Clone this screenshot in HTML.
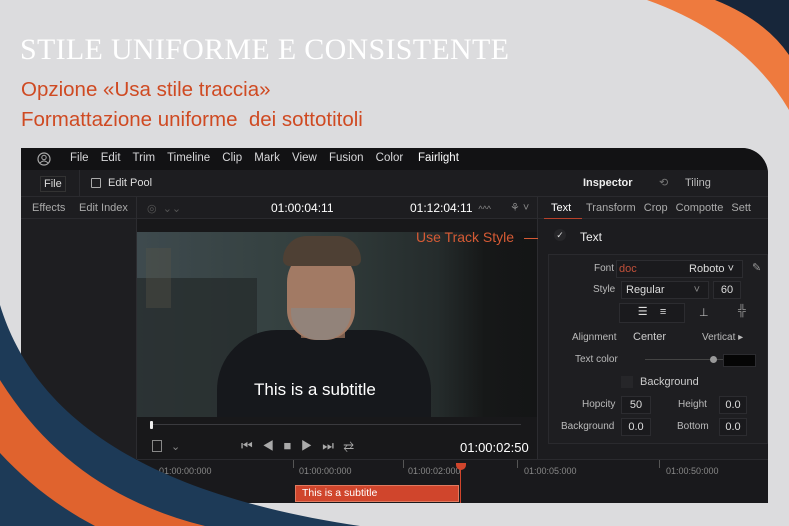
<!DOCTYPE html>
<html><head><meta charset="utf-8"><style>
*{margin:0;padding:0;box-sizing:border-box}
body{width:789px;height:526px;overflow:hidden;background:#dcdcde;position:relative;font-family:"Liberation Sans",sans-serif;}
.a{position:absolute}
.t{color:#c9c9cc;font-size:11px;white-space:nowrap}
.w{color:#fff}
.box{position:absolute;background:#1a1a1d;border:1px solid #2c2c30;color:#ddd;font-size:11px;text-align:center;line-height:16px}
</style></head><body>
<svg class="a" style="left:0;top:0" width="789" height="526">
<path d="M647,0 Q745,35 789,110 L789,0Z" fill="#ee7a3e"/>
<path d="M715,0 Q765,20 789,55 L789,0Z" fill="#17263a"/>
</svg>
<div class="a" style="left:20px;top:33px;font-family:'Liberation Serif',serif;font-size:30px;color:#fff;letter-spacing:0.3px;white-space:nowrap">STILE UNIFORME E CONSISTENTE</div>
<div class="a" style="left:21px;top:78px;font-size:20.5px;color:#cf4a22;white-space:nowrap">Opzione «Usa stile traccia»</div>
<div class="a" style="left:21px;top:108px;font-size:20.5px;color:#cf4a22;white-space:nowrap">Formattazione uniforme&nbsp; dei sottotitoli</div>

<!-- window -->
<div class="a" style="left:21px;top:148px;width:747px;height:355px;background:#1b1b1e;border-top-right-radius:26px;overflow:hidden">
 <div class="a" style="left:0;top:0;width:747px;height:22px;background:#121214"></div>
 <svg class="a" style="left:16px;top:4px" width="14" height="14"><circle cx="7" cy="7" r="6" fill="none" stroke="#aaa" stroke-width="1.2"/><circle cx="7" cy="5.5" r="2.2" fill="none" stroke="#aaa"/><path d="M3,11 Q7,7 11,11" fill="none" stroke="#aaa"/></svg>
 <div class="a t" style="left:49px;top:4px;font-size:11.5px;color:#d8d8da;word-spacing:9px">File Edit Trim Timeline Clip Mark View Fusion Color</div>
 <div class="a t" style="left:397px;top:4px;font-size:11.5px;color:#fff">Fairlight</div>
 <div class="a" style="left:0;top:22px;width:747px;height:27px;background:#1d1d20;border-bottom:1px solid #2a2a2e"></div>
 <div class="a t" style="left:19px;top:28px;border:1px solid #333;padding:1px 3px;color:#ddd">File</div>
 <div class="a" style="left:58px;top:22px;width:1px;height:27px;background:#2a2a2e"></div>
 <div class="a" style="left:70px;top:30px;width:10px;height:10px;border:1.3px solid #aaa;border-radius:1px"></div>
 <div class="a t" style="left:87px;top:29px;color:#ddd">Edit Pool</div>
 <div class="a t" style="left:562px;top:29px;color:#eee;font-weight:bold">Inspector</div>
 <div class="a t" style="left:638px;top:28px;color:#777">⟲</div>
 <div class="a t" style="left:664px;top:29px;color:#bbb">Tiling</div>
 <!-- row 3 -->
 <div class="a" style="left:0;top:49px;width:747px;height:22px;background:#1d1d20;border-bottom:1px solid #2a2a2e"></div>
 <div class="a t" style="left:11px;top:54px;color:#aaa">Effects</div>
 <div class="a t" style="left:58px;top:54px;color:#aaa">Edit Index</div>
 <div class="a" style="left:115px;top:49px;width:1px;height:262px;background:#2c2c30"></div>
 <div class="a t" style="left:126px;top:54px;color:#555">◎ &nbsp;⌄⌄</div>
 <div class="a t w" style="left:250px;top:53px;font-size:12px">01:00:04:11</div>
 <div class="a t w" style="left:389px;top:53px;font-size:12px">01:12:04:11 <span style="color:#888;font-size:9px">&nbsp;^^^</span></div>
 <div class="a t" style="left:489px;top:53px;color:#888">⚘ ˅</div>
 <div class="a" style="left:516px;top:49px;width:1px;height:262px;background:#2c2c30"></div>
 <div class="a t" style="left:530px;top:54px;color:#fff">Text</div>
 <div class="a" style="left:523px;top:70px;width:38px;height:2px;background:#b8412a"></div>
 <div class="a t" style="left:565px;top:54px;color:#aaa;word-spacing:5px">Transform Crop Compotte Sett</div>
 <!-- left panel -->
 <div class="a" style="left:0;top:71px;width:115px;height:240px;background:#1e1e21"></div>
 <!-- viewer -->
 <div class="a" style="left:116px;top:71px;width:400px;height:240px;background:#18181a"></div>
 <div class="a" style="left:116px;top:84px;width:400px;height:185px;background:linear-gradient(90deg,#3e4a4e 0%,#34403f 40%,#252c2c 75%,#161818 87%,#141516 100%)"></div>
 <div class="a" style="left:116px;top:130px;width:120px;height:139px;background:#242a2a;opacity:.7"></div>
 <div class="a" style="left:125px;top:100px;width:25px;height:60px;background:#5a5548;opacity:.35"></div>
 <!-- person -->
 <div class="a" style="left:196px;top:182px;width:214px;height:87px;background:#16181c;border-radius:60px 60px 0 0"></div>
 <div class="a" style="left:280px;top:160px;width:44px;height:30px;background:#7a5c4c"></div>
 <div class="a" style="left:266px;top:100px;width:68px;height:92px;background:#a27a64;border-radius:34px 34px 30px 30px"></div>
 <div class="a" style="left:270px;top:160px;width:60px;height:32px;background:#8e8680;border-radius:0 0 28px 28px;opacity:.8"></div>
 <div class="a" style="left:262px;top:88px;width:78px;height:30px;background:#4e4034;border-radius:38px 38px 10px 10px"></div>
 <div class="a" style="left:233px;top:232px;font-size:17px;color:#fff;font-family:'Liberation Sans',sans-serif">This is a subtitle</div>
 <div class="a t" style="left:395px;top:81px;font-size:14px;color:#d55a35">Use Track Style</div>
 <div class="a" style="left:503px;top:90px;width:30px;height:1px;background:#d55a35"></div>
 <!-- scrub -->
 <div class="a" style="left:130px;top:276px;width:370px;height:1px;background:#3a3a3e"></div>
 <div class="a" style="left:129px;top:273px;width:3px;height:8px;background:#eee;border-radius:1px"></div>
 <div class="a" style="left:131px;top:292px;width:10px;height:12px;border:1px solid #888"></div>
 <div class="a t" style="left:150px;top:292px;color:#888">⌄</div>
 <div class="a t" style="left:220px;top:290px;color:#aaa;font-size:13px;word-spacing:8px;letter-spacing:-1px">⏮ ◀ ■ ▶ ⏭ ⇄</div>
 <div class="a t w" style="left:439px;top:292px;font-size:13px">01:00:02:50</div>
 <!-- inspector -->
 <div class="a" style="left:517px;top:71px;width:230px;height:240px;background:#1c1c1f"></div>
 <div class="a" style="left:533px;top:81px;width:12px;height:12px;border-radius:6px;background:#262629;color:#ddd;font-size:9px;text-align:center;line-height:12px">✓</div>
 <div class="a t" style="left:559px;top:82px;color:#eee;font-size:12px">Text</div>
 <div class="a" style="left:527px;top:106px;width:220px;height:190px;border:1px solid #2a2a2e;background:#1e1e21"></div>
 <div class="a t" style="left:573px;top:115px;color:#bbb;font-size:10px">Font</div>
 <div class="box" style="left:595px;top:112px;width:127px;height:18px;text-align:left;padding-left:2px"><span style="color:#c0503a">doc</span><span style="position:absolute;right:8px;color:#ddd">Roboto ˅</span></div>
 <div class="a t" style="left:731px;top:113px;color:#999">✎</div>
 <div class="a t" style="left:572px;top:136px;color:#bbb;font-size:10px">Style</div>
 <div class="box" style="left:600px;top:133px;width:88px;height:18px;text-align:left;padding-left:4px">Regular<span style="position:absolute;right:8px;color:#888">˅</span></div>
 <div class="box" style="left:692px;top:133px;width:28px;height:18px">60</div>
 <div class="box" style="left:598px;top:155px;width:66px;height:20px;color:#ddd">☰ &nbsp;&nbsp; ≡</div>
 <div class="a t" style="left:678px;top:158px;color:#bbb">⊥</div>
 <div class="a t" style="left:717px;top:157px;color:#999">╬</div>
 <div class="a t" style="left:551px;top:184px;color:#bbb;font-size:10px">Alignment</div>
 <div class="a t" style="left:612px;top:183px;color:#ccc">Center</div>
 <div class="a t" style="left:681px;top:184px;color:#bbb;font-size:10px">Verticat ▸</div>
 <div class="a t" style="left:554px;top:206px;color:#bbb;font-size:10px">Text color</div>
 <div class="a" style="left:624px;top:211px;width:88px;height:1px;background:#444"></div>
 <div class="a" style="left:689px;top:208px;width:7px;height:7px;border-radius:4px;background:#999"></div>
 <div class="box" style="left:702px;top:206px;width:33px;height:13px;background:#050505"></div>
 <div class="a" style="left:600px;top:228px;width:12px;height:12px;background:#262629"></div>
 <div class="a t" style="left:619px;top:228px;color:#ccc">Background</div>
 <div class="a t" style="left:561px;top:251px;color:#bbb;font-size:10px">Hopcity</div>
 <div class="box" style="left:600px;top:248px;width:30px;height:18px">50</div>
 <div class="a t" style="left:657px;top:251px;color:#bbb;font-size:10px">Height</div>
 <div class="box" style="left:698px;top:248px;width:28px;height:18px">0.0</div>
 <div class="a t" style="left:540px;top:273px;color:#bbb;font-size:10px">Background</div>
 <div class="box" style="left:600px;top:270px;width:30px;height:18px">0.0</div>
 <div class="a t" style="left:656px;top:273px;color:#bbb;font-size:10px">Bottom</div>
 <div class="box" style="left:698px;top:270px;width:28px;height:18px">0.0</div>
 <!-- timeline -->
 <div class="a" style="left:116px;top:311px;width:631px;height:44px;background:#19191c;border-top:1px solid #2a2a2e"></div>
 <div class="a t" style="left:138px;top:318px;color:#888;font-size:9px">01:00:00:000</div>
 <div class="a" style="left:272px;top:312px;width:1px;height:8px;background:#555"></div>
 <div class="a t" style="left:278px;top:318px;color:#888;font-size:9px">01:00:00:000</div>
 <div class="a" style="left:382px;top:312px;width:1px;height:8px;background:#555"></div>
 <div class="a t" style="left:387px;top:318px;color:#888;font-size:9px">01:00:02:000</div>
 <div class="a" style="left:496px;top:312px;width:1px;height:8px;background:#555"></div>
 <div class="a t" style="left:503px;top:318px;color:#888;font-size:9px">01:00:05:000</div>
 <div class="a" style="left:638px;top:312px;width:1px;height:8px;background:#555"></div>
 <div class="a t" style="left:645px;top:318px;color:#888;font-size:9px">01:00:50:000</div>
 <div class="a" style="left:274px;top:337px;width:164px;height:17px;background:#d0452c;border:1px solid #e07a60;color:#fff;font-size:10.5px;padding-left:6px;line-height:15px">This is a subtitle</div>
 <div class="a" style="left:435px;top:315px;width:10px;height:7px;background:#d0452c;border-radius:0 0 5px 5px"></div>
 <div class="a" style="left:439px;top:318px;width:1px;height:37px;background:#d0452c"></div>
</div>

<svg class="a" style="left:0;top:0" width="789" height="526">
<path d="M0,305 C35,420 150,495 360,526 L0,526Z" fill="#1d3a57"/>
<path d="M0,380 C50,460 120,505 205,526 L95,526 C55,505 25,480 0,453Z" fill="#e0632e"/>
</svg>
</body></html>
